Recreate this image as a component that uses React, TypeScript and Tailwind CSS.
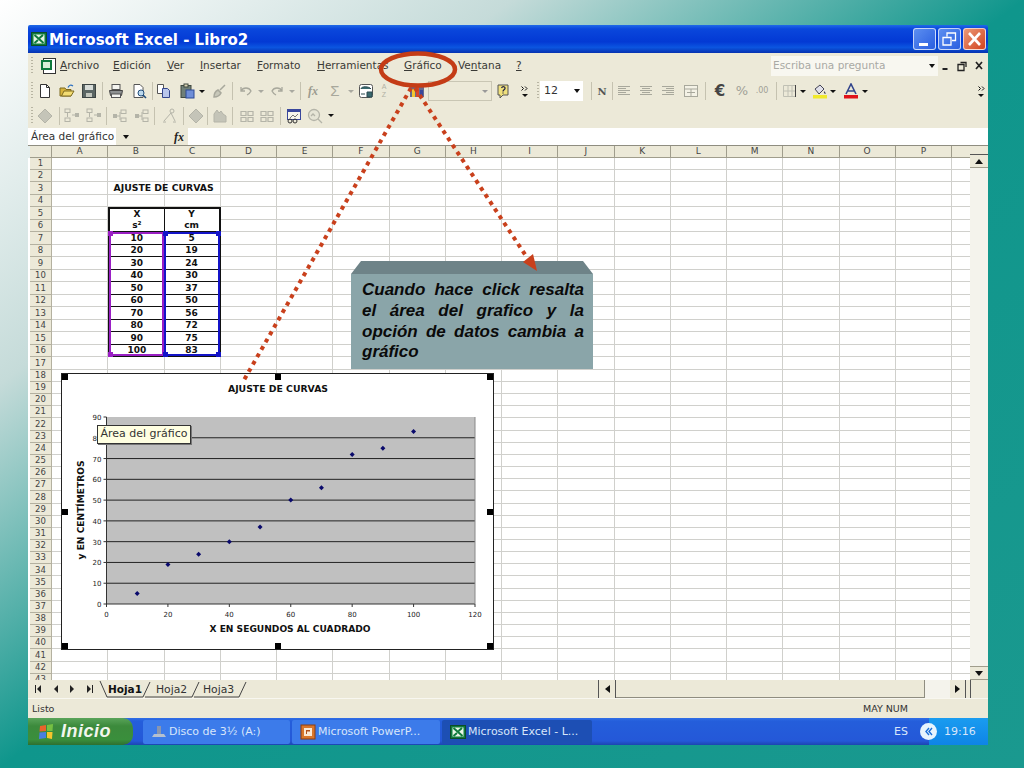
import type { ReactNode } from "react";

const COLUMNS = ["A", "B", "C", "D", "E", "F", "G", "H", "I", "J", "K", "L", "M", "N", "O", "P"];
const ROWS = Array.from({ length: 43 }, (_, i) => i + 1);
const DATA = [
  ["10", "5"],
  ["20", "19"],
  ["30", "24"],
  ["40", "30"],
  ["50", "37"],
  ["60", "50"],
  ["70", "56"],
  ["80", "72"],
  ["90", "75"],
  ["100", "83"],
];

function Icon({ children, className = "w-[22px]" }: { children: ReactNode; className?: string }) {
  return (
    <span className={`flex h-full shrink-0 items-center justify-center ${className}`}>
      <svg width="16" height="16" viewBox="0 0 16 16">
        {children}
      </svg>
    </span>
  );
}

function Sep({ className = "w-[4px]" }: { className?: string }) {
  return (
    <span className={`flex h-full shrink-0 items-center justify-center ${className}`}>
      <span className="h-[18px] w-px bg-[#c5c2b0]" />
    </span>
  );
}

function Gap({ className }: { className: string }) {
  return <span className={`shrink-0 ${className}`} />;
}

function Drop({ className = "w-[8px]", faded = false }: { className?: string; faded?: boolean }) {
  return (
    <span className={`flex h-full shrink-0 items-center justify-center ${className}`}>
      <span className={`h-0 w-0 border-x-[3px] border-t-[3px] border-x-transparent ${faded ? "border-t-[#a9a9a0]" : "border-t-[#111]"}`} />
    </span>
  );
}

function Grip() {
  return <span className="ml-[3px] mr-[1px] h-[18px] w-[2px] shrink-0 border-y-0 bg-[repeating-linear-gradient(to_bottom,#b8b5a3_0,#b8b5a3_1px,transparent_1px,transparent_3px)]" />;
}

function Chevrons({ className }: { className: string }) {
  return (
    <span className={`flex h-full shrink-0 flex-col items-center justify-center gap-[3px] ${className}`}>
      <svg width="7" height="5" viewBox="0 0 7 5">
        <path d="M0.5 0.5 2.5 2.5 0.5 4.5M4 0.5 6 2.5 4 4.5" fill="none" stroke="#111" />
      </svg>
      <span className="h-0 w-0 border-x-[3px] border-t-[3px] border-x-transparent border-t-[#111]" />
    </span>
  );
}

function ExcelLogo({ size = 16 }: { size?: number }) {
  return (
    <svg width={size} height={size} viewBox="0 0 16 16">
      <rect x="0.5" y="1.5" width="15" height="13" fill="#0f7a3c" stroke="#0c4d27" />
      <rect x="2.5" y="3.5" width="11" height="9" fill="#e8f5e6" />
      <path d="M3.5 4 8 8l4.500 4M12 4 8.500 7M7 9l-3.500 3" fill="none" stroke="#0f7a3c" strokeWidth="2" />
    </svg>
  );
}

function Toolbar1() {
  const faded = "#a8a89c";
  return (
    <div className="flex h-[24px] items-center bg-[#ece9d8]">
      <Grip />
      <Icon>
        <path d="M3.500 1.500h6l3 3v10h-9z" fill="#fff" stroke="#333" />
        <path d="M9.500 1.500v3h3" fill="none" stroke="#333" />
      </Icon>
      <Icon>
        <path d="M1 5h5l1 1.500h5V13H1z" fill="#d9b43c" stroke="#7c6a20" />
        <path d="M2.500 13 5 8h10l-3 5z" fill="#f3dc72" stroke="#7c6a20" />
        <path d="M9 4.500C10 2 12 1.500 14 3" fill="none" stroke="#2a6fc0" strokeWidth="1.200" />
      </Icon>
      <Icon>
        <rect x="1.500" y="1.500" width="13" height="13" fill="#5b6664" stroke="#3c4443" />
        <rect x="4" y="2" width="8" height="5" fill="#d7dcd8" />
        <rect x="5" y="10" width="6" height="4" fill="#c3c7be" />
      </Icon>
      <Sep />
      <Gap className="w-[1px]" />
      <Icon>
        <rect x="4" y="1.500" width="8" height="5" fill="#f4f4f0" stroke="#555" />
        <path d="M1.500 7.500h13l-1 5h-11z" fill="#8d9091" stroke="#444" />
        <rect x="3.500" y="11" width="9" height="3.500" fill="#f4f4f0" stroke="#555" />
      </Icon>
      <Icon className="w-[24px]">
        <path d="M3 1.500h6l3 3v10H3z" fill="#fff" stroke="#555" />
        <circle cx="10" cy="10" r="3" fill="#bcd9ee" stroke="#1f4c7a" />
        <path d="m12 12 3 3" stroke="#1f4c7a" strokeWidth="1.600" />
      </Icon>
      <Sep className="w-[2px]" />
      <Icon>
        <path d="M1.500 1.500h6v9h-6z" fill="#fff" stroke="#555" />
        <path d="M6.500 5.500h5l2 2v7h-7z" fill="#b9c6ec" stroke="#33458c" />
      </Icon>
      <Gap className="w-[1px]" />
      <Icon>
        <rect x="2" y="2.500" width="10" height="12" fill="#6f7f78" stroke="#40493f" />
        <rect x="5" y="1" width="4" height="3" fill="#d8d3b5" stroke="#40493f" />
        <rect x="7" y="7" width="8" height="8" fill="#6f8ed8" stroke="#2c4a96" />
      </Icon>
      <Drop />
      <Gap className="w-[2px]" />
      <Icon>
        <path d="m14 2-5 5M3 14c0-4 2-6 4-7l3 3c-1 2-3 4-7 4z" fill="#c8c8ba" stroke={faded} strokeWidth="1.500" />
      </Icon>
      <Sep />
      <Gap className="w-[1px]" />
      <Icon>
        <path d="M3 8c2-4 8-4 10 0-1 2-2 3-4 4M3 4v4h4" fill="none" stroke={faded} strokeWidth="1.300" />
      </Icon>
      <Drop faded />
      <Gap className="w-[1px]" />
      <Icon>
        <path d="M13 8C11 4 5 4 3 8c1 2 2 3 4 4M13 4v4H9" fill="none" stroke={faded} strokeWidth="1.300" />
      </Icon>
      <Drop faded />
      <Gap className="w-[2px]" />
      <Sep />
      <span className="flex h-full w-[22px] shrink-0 items-center justify-center font-['Liberation_Serif',serif] text-[12px] font-bold italic text-[#9c9c90]">
        fx
      </span>
      <span className="flex h-full w-[22px] shrink-0 items-center justify-center font-['Liberation_Sans',sans-serif] text-[15px] text-[#a8a89c]">
        Σ
      </span>
      <Drop faded className="w-[9px]" />
      <Icon className="w-[22px]">
        <rect x="1.500" y="1.500" width="13" height="13" rx="2" fill="#fff" stroke="#555" />
        <path d="M3 6c0-3 8-3 10 0M3 11h4M9 9h5v5H9z" fill="#3a6a70" stroke="#2a4a50" />
      </Icon>
      <span className="flex h-full w-[20px] shrink-0 flex-col items-center justify-center pr-[6px] font-['Liberation_Sans',sans-serif] text-[7px] leading-[8px] text-[#b0b0a4]">
        <span>A</span>
        <span>Z</span>
      </span>
      <Gap className="w-[9px]" />
      <Icon className="w-[22px]">
        <rect x="1" y="3" width="14" height="11" fill="#656a8c" />
        <rect x="3" y="6" width="3" height="8" fill="#f3c62e" />
        <rect x="7" y="4" width="3" height="10" fill="#d8452a" />
        <rect x="11" y="7" width="3" height="7" fill="#39479c" />
      </Icon>
      <span className="flex h-[20px] w-[64px] shrink-0 items-center justify-end border border-[#c9c6b4] pr-[3px]">
        <span className="h-0 w-0 border-x-[3px] border-t-[3px] border-x-transparent border-t-[#999]" />
      </span>
      <Gap className="w-[1px]" />
      <Icon>
        <path d="M2 2h10v10H7l-3 3v-3H2z" fill="#efe07c" stroke="#555" />
        <path d="M5.500 5c1-2 4-1.500 3.500 .5C8.700 6.800 7 6.800 7 8.500M7 9.500v1" fill="none" stroke="#224" strokeWidth="1.200" />
      </Icon>
      <Chevrons className="w-[19px]" />
      <Grip />
      <span className="flex h-[20px] w-[43px] shrink-0 items-center justify-between bg-white pl-[4px] pr-[3px] font-['DejaVu_Sans',sans-serif] text-[11px] text-[#333]">
        12
        <span className="h-0 w-0 border-x-[3.500px] border-t-[4px] border-x-transparent border-t-[#111]" />
      </span>
      <Gap className="w-[8px]" />
      <Sep className="w-px" />
      <span className="flex h-full w-[20px] shrink-0 items-center justify-center font-['DejaVu_Serif',serif] text-[10px] font-bold text-[#555]">
        N
      </span>
      <Sep className="w-px" />
      <Icon>
        <path d="M2 3.500h12M2 5.500h8M2 7.500h12M2 9.500h8M2 11.500h12" stroke={faded} />
      </Icon>
      <Icon>
        <path d="M2 3.500h12M4 5.500h8M2 7.500h12M4 9.500h8M2 11.500h12" stroke={faded} />
      </Icon>
      <Icon>
        <path d="M2 3.500h12M6 5.500h8M2 7.500h12M6 9.500h8M2 11.500h12" stroke={faded} />
      </Icon>
      <Icon className="w-[24px]">
        <rect x="1.500" y="2.500" width="13" height="11" fill="#f4f2e6" stroke={faded} />
        <path d="M1.500 6h13M8 6v7.500M4 9.500h8" stroke={faded} />
      </Icon>
      <Gap className="w-[2px]" />
      <Sep className="w-px" />
      <span className="flex h-full w-[28px] shrink-0 items-center justify-center font-['DejaVu_Sans',sans-serif] text-[15px] font-bold text-[#444]">
        €
      </span>
      <span className="flex h-full w-[16px] shrink-0 items-center justify-center font-['DejaVu_Sans',sans-serif] text-[13px] text-[#a0a096]">
        %
      </span>
      <span className="flex h-full w-[24px] shrink-0 items-center justify-center font-['DejaVu_Sans',sans-serif] text-[8px] leading-[8px] text-[#a0a096]">
        .00
      </span>
      <Gap className="w-[2px]" />
      <Sep className="w-px" />
      <Gap className="w-[5px]" />
      <Icon className="w-[16px]">
        <path d="M1.500 2.500h12v11h-12zM1.500 8h12M6 2.500v11M10 2.500v11" fill="none" stroke="#c0c0b4" />
        <path d="M13.500 2v12" stroke="#444" />
      </Icon>
      <Drop className="w-[10px]" />
      <Gap className="w-[3px]" />
      <Icon className="w-[18px]">
        <path d="m3 6 5-4 4 4-5 5z" fill="#e0e0ea" stroke="#445" />
        <path d="M12 8c1 1 2 2 1.500 3-1 0-2-1-1.500-3" fill="#445" />
        <rect x="1" y="12" width="14" height="3.500" fill="#f0e92c" />
      </Icon>
      <Drop className="w-[8px]" />
      <Gap className="w-[5px]" />
      <Icon className="w-[18px]">
        <path d="M3 11 8 1l5 10M5 8h6" fill="none" stroke="#33458c" strokeWidth="1.600" />
        <rect x="1" y="12" width="14" height="3.500" fill="#e0121a" />
      </Icon>
      <Drop className="w-[10px]" />
      <Gap className="flex-1" />
      <Chevrons className="w-[14px]" />
    </div>
  );
}

function Toolbar2() {
  const faded = "#b4b4a8";
  const flow = (
    <>
      <rect x="1" y="1" width="5" height="3.500" fill="none" stroke={faded} />
      <rect x="1" y="10" width="5" height="3.500" fill="none" stroke={faded} />
      <path d="M3.500 5v4M8 7h3" stroke={faded} />
      <rect x="11" y="5" width="4" height="4" fill={faded} />
    </>
  );
  const tree = (
    <>
      <rect x="1" y="6" width="4" height="4" fill={faded} />
      <path d="M5 8h3M8 4v8" stroke={faded} />
      <rect x="9" y="2" width="5" height="3.500" fill="none" stroke={faded} />
      <rect x="9" y="10" width="5" height="3.500" fill="none" stroke={faded} />
    </>
  );
  const diamond = <path d="m8 1 7 7-7 7-7-7z" fill="#c4c4b8" stroke={faded} />;
  const table = (
    <path d="M2 3.500h5v4H2zM9 3.500h5v4H9zM2 9.500h5v4H2zM9 9.500h5v4H9z" fill="none" stroke={faded} strokeWidth="1.200" />
  );
  return (
    <div className="flex h-[25px] items-center bg-[#ece9d8]">
      <Grip />
      <Gap className="w-px" />
      <Icon className="w-[20px]">{diamond}</Icon>
      <Gap className="w-[4px]" />
      <Sep className="w-px" />
      <Gap className="w-[1px]" />
      <Icon>{flow}</Icon>
      <Icon>{flow}</Icon>
      <Gap className="w-[1px]" />
      <Sep className="w-px" />
      <Gap className="w-[2px]" />
      <Icon>{tree}</Icon>
      <Icon>{tree}</Icon>
      <Sep className="w-[2px]" />
      <Gap className="w-[3px]" />
      <Icon>
        <circle cx="11" cy="3" r="2" fill="none" stroke={faded} />
        <path d="M10 5 3 13M10 5l4 8M2 14h3M12 14h3" fill="none" stroke={faded} />
      </Icon>
      <Gap className="w-[3px]" />
      <Sep className="w-px" />
      <Gap className="w-px" />
      <Icon>{diamond}</Icon>
      <Sep className="w-px" />
      <Gap className="w-px" />
      <Icon>
        <path d="M2 14V6l3-4 2 3 2-2 2 3 3 2v6z" fill="#c4c4b8" stroke={faded} />
      </Icon>
      <Sep className="w-[2px]" />
      <Gap className="w-[3px]" />
      <Icon className="w-[21px]">{table}</Icon>
      <Icon className="w-[20px]">{table}</Icon>
      <Gap className="w-[3px]" />
      <Sep className="w-px" />
      <Gap className="w-[2px]" />
      <Icon>
        <rect x="1.500" y="1.500" width="13" height="10" fill="#f6f5ec" stroke="#39479c" />
        <rect x="2" y="2" width="12" height="2" fill="#39479c" />
        <path d="m4 10 3-3 2 2 3-3" fill="none" stroke="#777" />
        <circle cx="4" cy="13" r="2" fill="none" stroke="#333" />
        <circle cx="9" cy="13" r="2" fill="none" stroke="#333" />
      </Icon>
      <Icon className="w-[20px]">
        <circle cx="7" cy="7" r="5.500" fill="#e6e5d6" stroke={faded} strokeWidth="1.300" />
        <path d="m11 11 4 4M4 8l2-2 2 2" fill="none" stroke={faded} strokeWidth="1.300" />
      </Icon>
      <Drop className="w-[12px]" />
    </div>
  );
}

function Menu() {
  return (
    <div className="flex h-[26px] items-center bg-[#ece9d8] font-['DejaVu_Sans',sans-serif] text-[10.500px] text-[#3a3a36]">
      <Grip />
      <span className="ml-[3px] flex w-[23px] shrink-0 items-center justify-center">
        <svg width="17" height="17" viewBox="0 0 17 17">
          <rect x="3.500" y="0.500" width="12" height="15" fill="#fff" stroke="#333" />
          <rect x="1" y="2" width="11" height="10" fill="#0f7a3c" />
          <rect x="3" y="4" width="7" height="6" fill="#d9f0d6" />
        </svg>
      </span>
      <span className="w-[53px] shrink-0"><u>A</u>rchivo</span>
      <span className="w-[54px] shrink-0"><u>E</u>dición</span>
      <span className="w-[33px] shrink-0"><u>V</u>er</span>
      <span className="w-[57px] shrink-0"><u>I</u>nsertar</span>
      <span className="w-[60px] shrink-0"><u>F</u>ormato</span>
      <span className="w-[87px] shrink-0"><u>H</u>erramientas</span>
      <span className="w-[54px] shrink-0"><u>G</u>ráfico</span>
      <span className="w-[58px] shrink-0">Ve<u>n</u>tana</span>
      <span className="w-[9px] shrink-0"><u>?</u></span>
      <span className="ml-[246px] flex h-[20px] w-[167px] shrink-0 items-center justify-between bg-[#f8f7f0] pl-[2px] pr-[3px] text-[#a9a9a4]">
        Escriba una pregunta
        <span className="h-0 w-0 border-x-[3.500px] border-t-[4px] border-x-transparent border-t-[#111]" />
      </span>
      <svg width="48" height="14" viewBox="0 0 48 14" className="shrink-0">
        <path d="M4.500 10h5" stroke="#222" strokeWidth="2" />
        <path d="M20 5.500h6v6h-6zM22.500 3.500H28V8" fill="none" stroke="#222" strokeWidth="1.300" />
        <path d="m38 3 6 7m0-7-6 7" stroke="#222" strokeWidth="1.700" />
      </svg>
    </div>
  );
}

function TitleBar() {
  return (
    <div className="flex h-[28px] items-center justify-between rounded-t-[2px] bg-[linear-gradient(to_bottom,#1f6ae8_0%,#0a47dc_14%,#0339d4_60%,#0b55e0_80%,#0632b0_100%)] pl-[3px] pr-[2px]">
      <div className="flex items-center gap-[2px]">
        <ExcelLogo />
        <span className="pt-[2px] font-['DejaVu_Sans',sans-serif] text-[15px] font-bold text-white">Microsoft Excel - Libro2</span>
      </div>
      <div className="flex items-center gap-[2px]">
        <span className="flex h-[22px] w-[23px] items-end rounded-[3px] border border-white/70 bg-[linear-gradient(135deg,#5c8ef0,#2a5fe0)] pb-[3px] pl-[5px]">
          <span className="h-[3px] w-[9px] bg-white" />
        </span>
        <span className="flex h-[22px] w-[23px] items-center justify-center rounded-[3px] border border-white/70 bg-[linear-gradient(135deg,#5c8ef0,#2a5fe0)]">
          <svg width="15" height="14" viewBox="0 0 15 14">
            <path d="M1 5.500h8v7.500H1zM5 4.500V1h8.500v7.500H10" fill="none" stroke="#fff" strokeWidth="1.300" />
          </svg>
        </span>
        <span className="flex h-[22px] w-[23px] items-center justify-center rounded-[3px] border border-white/70 bg-[linear-gradient(135deg,#ea9a78,#d3431e)]">
          <svg width="15" height="14" viewBox="0 0 15 14">
            <path d="m2 1 11 12M13 1 2 13" stroke="#fff" strokeWidth="2.600" />
          </svg>
        </span>
      </div>
    </div>
  );
}

function FormulaBar() {
  return (
    <div className="flex h-[17px] items-center bg-white font-['DejaVu_Sans',sans-serif] text-[10.500px] text-[#333]">
      <span className="flex h-full w-[88px] shrink-0 items-center whitespace-nowrap pl-[3px]">Área del gráfico</span>
      <span className="flex h-full w-[72px] shrink-0 items-center bg-[#ece9d8]">
        <span className="ml-[7px] h-0 w-0 border-x-[3.500px] border-t-[4px] border-x-transparent border-t-[#111]" />
        <span className="ml-[45px] font-['Liberation_Serif',serif] text-[12px] font-bold italic text-[#222]">fx</span>
      </span>
    </div>
  );
}

function cellClass(row: number, col: string) {
  if (col === "B" || col === "C") {
    const right = col === "B" ? "border-r-[#111]" : "border-r-[#111] border-r-2";
    const left = col === "B" ? "border-l-2 border-l-[#111]" : "";
    if (row === 5) return `border-t-2 border-t-[#111] border-b-transparent border-r ${right} ${left}`;
    if (row === 6) return `border-b border-b-[#111] border-r ${right} ${left}`;
    if (row >= 7 && row <= 15) return `border-b border-b-[#111] border-r ${right} ${left}`;
    if (row === 16) return `border-b-2 border-b-[#111] border-r ${right} ${left}`;
  }
  return "border-b border-r border-[#d0d0cc]";
}

function cellText(row: number, col: string) {
  if (col === "B") {
    if (row === 5) return "X";
    if (row === 6) return "s²";
    if (row >= 7 && row <= 16) return DATA[row - 7][0];
  }
  if (col === "C") {
    if (row === 5) return "Y";
    if (row === 6) return "cm";
    if (row >= 7 && row <= 16) return DATA[row - 7][1];
  }
  return "";
}

function Sheet() {
  return (
    <div className="flex h-[535px]">
      <div className="w-[942px] shrink-0 overflow-hidden">
        <div className="flex h-[13px] border-t border-[#8f8d80] font-['DejaVu_Sans',sans-serif] text-[9px] leading-[11px] text-[#444]">
          <span className="ml-[2px] w-[22px] shrink-0 border-b border-r border-[#a09d8c] bg-[#ece9d8]" />
          {COLUMNS.map((c) => (
            <span key={c} className="w-[56.250px] shrink-0 border-b border-r border-[#a09d8c] bg-[#ece9d8] text-center">
              {c}
            </span>
          ))}
          <span className="flex-1 border-b border-[#a09d8c] bg-[#ece9d8]" />
        </div>
        {ROWS.map((r) => (
          <div key={r} className={`flex bg-white ${r >= 3 && r <= 17 ? "h-[12.500px]" : "h-[12.170px]"}`}>
            <span className="ml-[2px] flex w-[22px] shrink-0 items-center justify-center border-b border-r border-[#b4b1a0] bg-[#ece9d8] font-['DejaVu_Sans',sans-serif] text-[8.500px] text-[#444]">
              {r}
            </span>
            {COLUMNS.map((c) => (
              <span
                key={c}
                className={`relative flex w-[56.250px] shrink-0 items-center justify-center font-['DejaVu_Sans',sans-serif] text-[9px] font-bold leading-none text-[#111] ${cellClass(r, c)}`}
              >
                {cellText(r, c)}
                {r === 3 && c === "C" ? (
                  <span className="absolute left-[-51px] whitespace-nowrap text-[9.300px]">AJUSTE DE CURVAS</span>
                ) : null}
              </span>
            ))}
            <span className="flex-1 border-b border-[#d0d0cc]" />
          </div>
        ))}
      </div>
      <div className="flex w-[18px] shrink-0 flex-col border-t border-[#8f8d80] bg-[#f4f3ec]">
        <span className="h-[9px] border-b border-[#555] bg-[#ece9d8]" />
        <span className="flex h-[13px] items-center justify-center border-b border-[#a09d8c] bg-[#ece9d8]">
          <span className="h-0 w-0 border-x-[4px] border-b-[5px] border-x-transparent border-b-[#111]" />
        </span>
        <span className="flex-1" />
        <span className="flex h-[14px] items-center justify-center border-y border-[#a09d8c] bg-[#ece9d8]">
          <span className="h-0 w-0 border-x-[4px] border-t-[5px] border-x-transparent border-t-[#111]" />
        </span>
      </div>
    </div>
  );
}

function SheetTabs() {
  return (
    <div className="flex h-[18px] items-center bg-[#ece9d8] font-['DejaVu_Sans',sans-serif] text-[11px] text-[#333]">
      <svg width="66" height="10" viewBox="0 0 66 10" className="ml-[4px] shrink-0">
        <path d="M3 1v8h1V1zM9 1 5 5l4 4zM26 1l-4 4 4 4zM38 1l4 4-4 4zM55 1l4 4-4 4zM60 1v8h1V1z" fill="#222" />
      </svg>
      <svg width="180" height="18" viewBox="0 0 180 18" className="ml-[1px] shrink-0">
        <path d="M1 1 8 17H44L51 2M46 17H93L100 2M95 17H140L147 2" fill="none" stroke="#444" />
        <text x="9" y="13" fontFamily="DejaVu Sans" fontWeight="700" fontSize="10.500" fill="#111">Hoja1</text>
        <text x="57" y="13" fontFamily="DejaVu Sans" fontSize="10.800" fill="#333">Hoja2</text>
        <text x="104" y="13" fontFamily="DejaVu Sans" fontSize="10.800" fill="#333">Hoja3</text>
      </svg>
      <span className="ml-[319px] flex h-[18px] w-[18px] shrink-0 items-center justify-center border-x border-[#555]">
        <span className="h-0 w-0 border-y-[4px] border-r-[5px] border-y-transparent border-r-[#111]" />
      </span>
      <span className="h-[18px] w-[309px] shrink-0 border-b border-r border-[#8f8d80]" />
      <span className="h-[18px] w-[25px] shrink-0 bg-[#f4f3ec]" />
      <span className="flex h-[18px] w-[16px] shrink-0 items-center justify-center border-r border-[#555]">
        <span className="h-0 w-0 border-y-[4px] border-l-[5px] border-y-transparent border-l-[#111]" />
      </span>
      <span className="ml-[4px] h-[18px] w-px shrink-0 bg-[#555]" />
    </div>
  );
}

function StatusBar() {
  return (
    <div className="flex h-[20px] items-center justify-between border-t border-[#f8f7f0] bg-[#ece9d8] pl-[4px] pr-[80px] pt-[2px] font-['DejaVu_Sans',sans-serif] text-[9.500px] text-[#333]">
      <span>Listo</span>
      <span>MAY NUM</span>
    </div>
  );
}

function TaskButton({ className, icon, label }: { className: string; icon: ReactNode; label: string }) {
  return (
    <span className={`flex h-[24px] shrink-0 items-center gap-[2px] rounded-[2px] pl-[8px] pt-[1px] font-['DejaVu_Sans',sans-serif] text-[11px] ${className}`}>
      {icon}
      {label}
    </span>
  );
}

function Taskbar() {
  return (
    <div className="flex h-[27px] items-center bg-[linear-gradient(to_bottom,#2f6ee6_0%,#245edb_12%,#2458d8_85%,#1c45b0_100%)] font-['DejaVu_Sans',sans-serif] text-[#d8e6fa]">
      <span className="flex h-full w-[105px] shrink-0 items-center gap-[6px] rounded-r-[10px] bg-[linear-gradient(to_bottom,#5aa45a_0%,#3c8a3c_30%,#3a8f3c_80%,#2e6f30_100%)] pl-[10px]">
        <svg width="17" height="17" viewBox="0 0 17 17">
          <path d="M2 3 8 2v6L1.500 8.500z" fill="#e8632c" />
          <path d="M9 2l6-1-.500 7L9 8z" fill="#76c043" />
          <path d="M1.500 9.500 8 9v6l-7 1z" fill="#4a7fe0" />
          <path d="M9 9h5.500l-.500 7-5-1z" fill="#f6c52c" />
        </svg>
        <span className="font-['Liberation_Sans',sans-serif] text-[18px] font-bold italic tracking-[0.5px] text-[#f2f6ee]">Inicio</span>
      </span>
      <TaskButton
        className="ml-[10px] w-[147px] bg-[#3c7bea]"
        label="Disco de 3½ (A:)"
        icon={
          <svg width="16" height="16" viewBox="0 0 16 16">
            <path d="M3 10h10l2 3H1z" fill="#b4c0d0" />
            <path d="M6 2h4v8H6z" fill="#8896b0" />
          </svg>
        }
      />
      <TaskButton
        className="ml-[2px] w-[148px] bg-[#3c7bea]"
        label="Microsoft PowerP..."
        icon={
          <svg width="16" height="16" viewBox="0 0 16 16">
            <rect x="1" y="1" width="14" height="14" fill="#d9772c" stroke="#8c3e10" />
            <rect x="4" y="4" width="8" height="8" fill="#fbe9d4" />
            <path d="M6 6h4v1.500H7V10H6z" fill="#b0501a" />
          </svg>
        }
      />
      <TaskButton className="ml-[2px] w-[150px] bg-[#1d4fb4]" label="Microsoft Excel - L..." icon={<ExcelLogo />} />
      <span className="flex-1 pr-[21px] pt-[1px] text-right text-[11px]">ES</span>
      <span className="flex h-full w-[59px] shrink-0 items-center bg-[linear-gradient(to_bottom,#1a9cf0,#0e84e6)]">
        <span className="ml-[-9px] flex h-[17px] w-[17px] shrink-0 items-center justify-center rounded-full bg-[#e8f4fd]">
          <svg width="9" height="9" viewBox="0 0 9 9">
            <path d="M5 1 2 4.500 5 8M8 1 5 4.500 8 8" fill="none" stroke="#1a6ed8" strokeWidth="1.400" />
          </svg>
        </span>
        <span className="ml-[7px] pt-[1px] text-[11px]">19:16</span>
      </span>
    </div>
  );
}

function Handle({ className }: { className: string }) {
  return <span className={`absolute h-[6px] w-[6px] bg-black ${className}`} />;
}

const X_TICKS = [0, 20, 40, 60, 80, 100, 120];
const Y_TICKS = [0, 10, 20, 30, 40, 50, 60, 70, 80, 90];

function Chart() {
  // plot area inside the chart box, in box pixels
  const left = 44.5;
  const right = 413;
  const top = 43;
  const bottom = 230;
  const px = (v: number) => left + (v / 120) * (right - left);
  const py = (v: number) => bottom - (v / 90) * (bottom - top);
  const labelFont = "DejaVu Sans";
  return (
    <div className="absolute left-[61px] top-[373px] h-[277px] w-[433px] border border-[#222] bg-white">
      <svg width="431" height="275" viewBox="0 0 431 275" className="block">
        <text x="216" y="18" textAnchor="middle" fontFamily={labelFont} fontWeight="700" fontSize="9.300" fill="#111">AJUSTE DE CURVAS</text>
        <rect x={left} y={top} width={right - left} height={bottom - top} fill="#c0c0c0" />
        {Y_TICKS.slice(1, -1).map((v) => (
          <line key={v} x1={left} x2={right} y1={py(v)} y2={py(v)} stroke="#222" />
        ))}
        <path d={`M${left} ${top}V${bottom}H${right}`} fill="none" stroke="#333" />
        <rect x={right - 0.5} y={top} width="1" height={bottom - top} fill="#888" />
        {Y_TICKS.map((v) => (
          <g key={v}>
            <line x1={left - 3} x2={left} y1={py(v)} y2={py(v)} stroke="#333" />
            <text x={left - 5} y={py(v) + 3} textAnchor="end" fontFamily={labelFont} fontSize="7" fill="#222">{v}</text>
          </g>
        ))}
        {X_TICKS.map((v) => (
          <g key={v}>
            <line x1={px(v)} x2={px(v)} y1={bottom} y2={bottom + 3} stroke="#333" />
            <text x={px(v)} y={bottom + 13} textAnchor="middle" fontFamily={labelFont} fontSize="7" fill="#222">{v}</text>
          </g>
        ))}
        {DATA.map(([x, y]) => (
          <path key={x} d={`M${px(+x)} ${py(+y) - 2.5}l2.500 2.500-2.500 2.500-2.500-2.500z`} fill="#0a0a6c" />
        ))}
        <text x="228" y="258" textAnchor="middle" fontFamily={labelFont} fontWeight="700" fontSize="9.100" fill="#111">X EN SEGUNDOS AL CUADRADO</text>
        <text transform="translate(22 136) rotate(-90)" textAnchor="middle" fontFamily={labelFont} fontWeight="700" fontSize="9.100" fill="#111">y EN CENTÍMETROS</text>
      </svg>
      <Handle className="left-0 top-0" />
      <Handle className="left-[213px] top-0" />
      <Handle className="right-0 top-0" />
      <Handle className="left-0 top-[135px]" />
      <Handle className="right-0 top-[135px]" />
      <Handle className="bottom-0 left-0" />
      <Handle className="bottom-0 left-[213px]" />
      <Handle className="bottom-0 right-0" />
      <span className="absolute left-[35px] top-[51px] flex h-[19px] w-[94px] items-center justify-center border border-[#333] bg-[#ffffe1] font-['DejaVu_Sans',sans-serif] text-[11px] text-[#333] shadow-[1px_1px_0_#777]">
        Área del gráfico
      </span>
    </div>
  );
}

function RangeMarks() {
  const corners = "absolute h-[5px] w-[5px]";
  return (
    <>
      <div className="absolute left-[109px] top-[232px] h-[124px] w-[55px] border-2 border-[#9a1fc4]">
        <span className={`${corners} left-[-3px] top-[-3px] bg-[#9a1fc4]`} />
        <span className={`${corners} bottom-[-3px] left-[-3px] bg-[#9a1fc4]`} />
      </div>
      <div className="absolute left-[164px] top-[232px] h-[124px] w-[56px] border-2 border-[#1414c8]">
        <span className={`${corners} left-[-3px] top-[-3px] bg-[#1414c8]`} />
        <span className={`${corners} right-[-3px] top-[-3px] bg-[#1414c8]`} />
        <span className={`${corners} bottom-[-3px] left-[-3px] bg-[#1414c8]`} />
        <span className={`${corners} bottom-[-3px] right-[-3px] bg-[#1414c8]`} />
      </div>
    </>
  );
}

function Callout() {
  return (
    <div className="absolute left-[351px] top-[261px] w-[242px]">
      <svg width="242" height="13" viewBox="0 0 242 13" className="block">
        <path d="M10 0H232L242 13H0z" fill="#6e8388" />
      </svg>
      <p className="h-[95px] bg-[#8aa5a9] pl-[11px] pr-[9px] pt-[6px] text-justify font-['Liberation_Sans',sans-serif] text-[17px] font-bold italic leading-[20.800px] text-[#0a0a0a]">
        Cuando hace click resalta el área del grafico y la opción de datos cambia a gráfico
      </p>
    </div>
  );
}

function Annotation() {
  return (
    <svg width="1024" height="768" viewBox="0 0 1024 768" className="pointer-events-none absolute left-0 top-0">
      <line x1="411" y1="88" x2="244" y2="380" stroke="#c9401c" strokeWidth="4" strokeDasharray="4 4.500" />
      <line x1="415" y1="88" x2="526" y2="256" stroke="#c9401c" strokeWidth="4" strokeDasharray="4 4.500" />
      <path d="M537 271 523 262 533 254z" fill="#c9401c" />
      <ellipse cx="418" cy="69.500" rx="37" ry="16" fill="none" stroke="#c43c16" strokeWidth="4.500" />
    </svg>
  );
}

export default function App() {
  return (
    <div className="relative h-[768px] w-[1024px] overflow-hidden bg-[linear-gradient(to_bottom_right,#ffffff_0%,#c5dbd9_25%,#0f968c_50%,#1a998f_100%)] pl-[28px] pt-[25px]">
      <div className="w-[960px]">
        <TitleBar />
        <Menu />
        <Toolbar1 />
        <Toolbar2 />
        <FormulaBar />
        <Sheet />
        <SheetTabs />
        <StatusBar />
        <Taskbar />
      </div>
      <RangeMarks />
      <Chart />
      <Callout />
      <Annotation />
    </div>
  );
}
